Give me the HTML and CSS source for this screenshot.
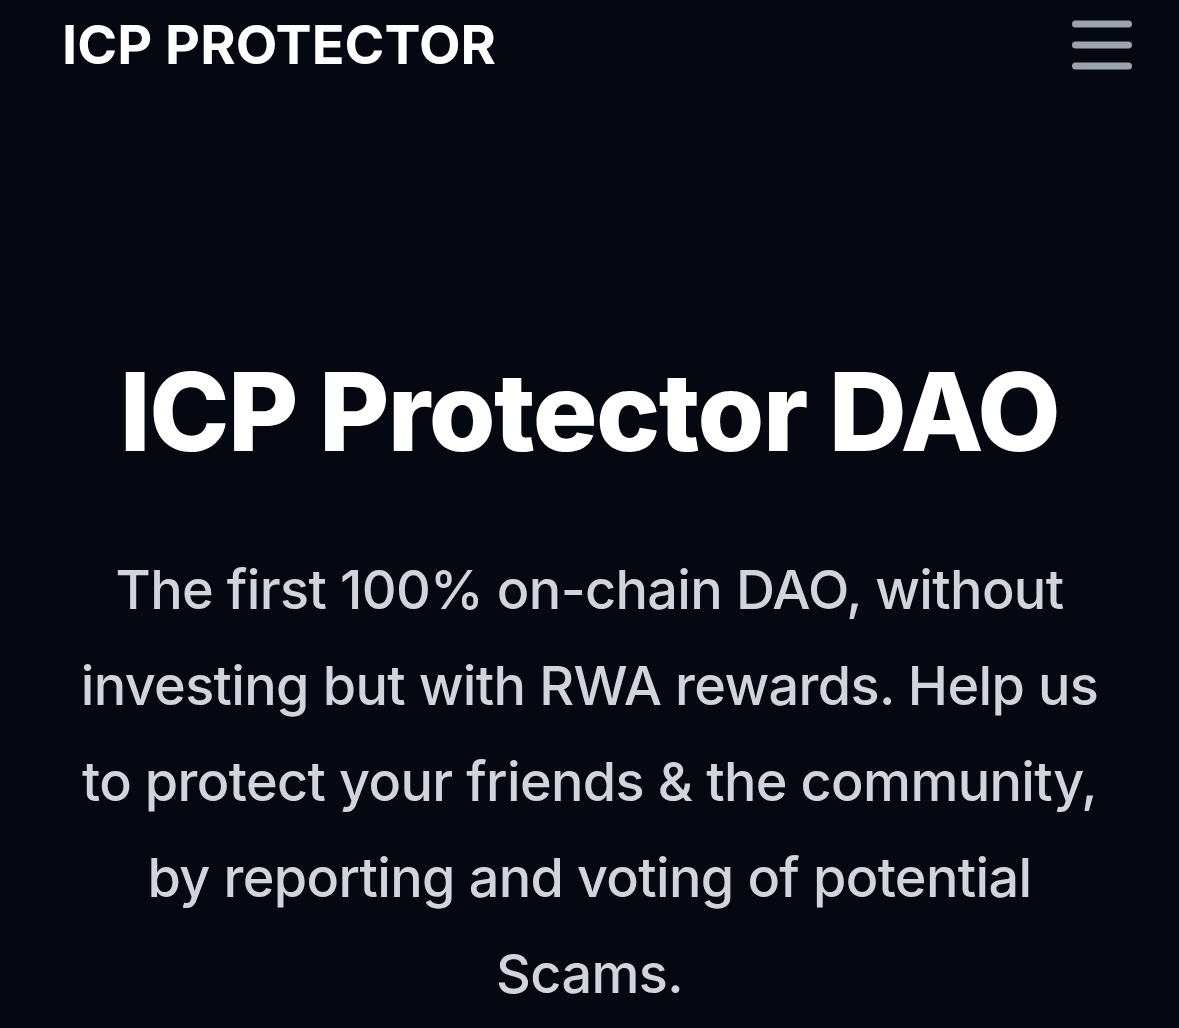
FILE: index.html
```html
<!DOCTYPE html>
<html lang="en">
<head>
  <meta charset="UTF-8" />
  <meta name="viewport" content="width=device-width, initial-scale=1.0" />
  <title>ICP Protector DAO</title>
  <link rel="stylesheet" href="styles.css">
</head>
<body>

  <header class="topbar">
    <a class="brand" href="#">ICP PROTECTOR</a>
    <button class="menu-btn" title="Open menu">
      <svg viewBox="0 0 60 54">
        <line x1="3.5" y1="6" x2="56.5" y2="6" />
        <line x1="3.5" y1="27" x2="56.5" y2="27" />
        <line x1="3.5" y1="48" x2="56.5" y2="48" />
      </svg>
    </button>
  </header>

  <main class="hero">
    <h1>ICP Protector DAO</h1>
    <p>
      The first 100% on-chain DAO, without investing but with RWA rewards.
      Help us to protect your friends &amp; the community, by reporting and
      voting of potential Scams.
    </p>
  </main>

</body>
</html>
```

FILE: styles.css
```css
:root {
  --bg: #050811;
  --text: #ffffff;
  --muted: #d1d5db;
  --icon: #9ca3af;
}

* {
  box-sizing: border-box;
  font-family: 'Inter', 'Noto Sans', sans-serif;
}

body {
  margin: 0;
  min-height: 100vh;
  background: var(--bg);
  color: var(--text);
  overflow: hidden;
}

.topbar {
  display: flex;
  align-items: flex-start;
  justify-content: space-between;
  padding: 18px 47px 0 62px;
}

.brand {
  color: var(--text);
  text-decoration: none;
  font-size: 54px;
  font-weight: 700;
  line-height: 1;
  letter-spacing: 0.001em;
}

.menu-btn {
  background: none;
  border: none;
  padding: 0;
  cursor: pointer;
}

.menu-btn svg {
  display: block;
  width: 60px;
  height: 54px;
  stroke: var(--icon);
  stroke-width: 7;
  stroke-linecap: round;
}

.hero {
  display: flex;
  flex-direction: column;
  align-items: center;
  text-align: center;
  padding-top: 286px;
}

.hero h1 {
  margin: 0;
  font-size: 108px;
  font-weight: 800;
  line-height: 1;
  letter-spacing: -0.014em;
}

.hero p {
  margin: 76px 0 0;
  max-width: 1030px;
  font-size: 54px;
  font-weight: 500;
  line-height: 96px;
  letter-spacing: -0.012em;
  color: var(--muted);
}
```
